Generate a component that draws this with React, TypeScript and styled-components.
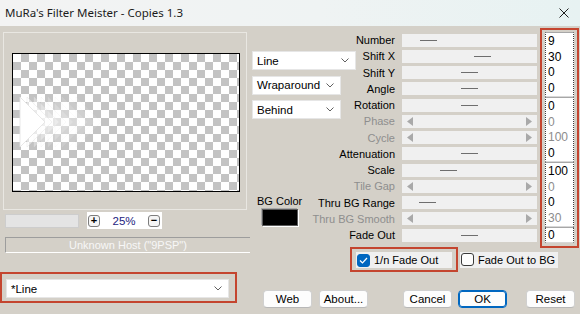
import styled, { createGlobalStyle } from 'styled-components'

const GlobalStyle = createGlobalStyle`
  html, body {
    margin: 0;
    padding: 0;
    background: #d4d0c8;
  }
  * { box-sizing: border-box; }
`

const RED = '#c4452f'
const ROW = 16.25

type Param = {
  label: string
  value: string
  thumb?: number
  disabled?: boolean
}

const params: Param[] = [
  { label: 'Number', value: '9', thumb: 18 },
  { label: 'Shift X', value: '30', thumb: 72 },
  { label: 'Shift Y', value: '0', thumb: 59 },
  { label: 'Angle', value: '0', thumb: 59 },
  { label: 'Rotation', value: '0', thumb: 59 },
  { label: 'Phase', value: '0', disabled: true },
  { label: 'Cycle', value: '100', disabled: true },
  { label: 'Attenuation', value: '0', thumb: 59 },
  { label: 'Scale', value: '100', thumb: 38 },
  { label: 'Tile Gap', value: '0', disabled: true },
  { label: 'Thru BG Range', value: '0', thumb: 17 },
  { label: 'Thru BG Smooth', value: '30', disabled: true },
  { label: 'Fade Out', value: '0', thumb: 59 },
]

// edit boxes come in blocks of four rows
const inputGroups = [params.slice(0, 4), params.slice(4, 8), params.slice(8, 12), params.slice(12)]

const Window = styled.div`
  width: 580px;
  height: 314px;
  background: #d4d0c8;
  display: flex;
  flex-direction: column;
  overflow: hidden;
  font-family: "Liberation Sans", Arial, sans-serif;
  font-size: 11px;
  color: #000;
`

const TitleBar = styled.div`
  height: 26px;
  flex-shrink: 0;
  display: flex;
  align-items: center;
  justify-content: space-between;
  padding: 0 11px 1px 5px;
  background: linear-gradient(90deg, #f3f3f3 0%, #eff3f3 55%, #e7f2f2 100%);
  font-family: "Noto Sans", "Open Sans", sans-serif;
  font-size: 11.5px;
  color: #1b1b1b;
`

const Body = styled.div`
  flex: 1;
  display: flex;
`

const LeftPane = styled.div`
  width: 250px;
  flex-shrink: 0;
  display: flex;
  flex-direction: column;
`

const GroupBox = styled.div`
  margin: 6px 0 0 3px;
  width: 244px;
  height: 178px;
  border: 1px solid #e9e7e2;
  padding: 20px 0 0 8px;
`

const Canvas = styled.div`
  width: 228px;
  height: 139px;
  border: 1px solid #000;
  background-color: #fff;
  background-image: conic-gradient(#c3c3c3 25%, #fff 0 50%, #c3c3c3 0 75%, #fff 0);
  background-size: 16px 16px;

  svg { display: block; }
`

const ZoomRow = styled.div`
  margin-top: 2px;
  height: 17px;
  display: flex;
  align-items: center;
`

const ZoomField = styled.div`
  margin-left: 5px;
  width: 74px;
  height: 14px;
  background: #e4e4e4;
  border: 1px solid #cdcdcd;
`

const ZoomBox = styled.div`
  margin-left: 8px;
  width: 75px;
  height: 17px;
  background: #fff;
  display: flex;
  align-items: center;
  padding: 0 2px 0 1px;
`

const TinyButton = styled.div`
  width: 12px;
  height: 12px;
  border: 1px solid #7d7d7d;
  border-radius: 3px;
  background: #f5f5f5;
  display: flex;
  align-items: center;
  justify-content: center;
  font-weight: bold;
  font-size: 11px;
  line-height: 1;
`

const ZoomValue = styled.span`
  flex: 1;
  text-align: center;
  color: #1d1d7e;
  font-size: 11.5px;
`

const HostBar = styled.div`
  margin: 8px 0 0 5px;
  height: 16px;
  border-top: 1px solid #9d9d9d;
  border-left: 1px solid #9d9d9d;
  border-bottom: 1px solid #fff;
  display: flex;
  align-items: center;
  justify-content: center;
  color: #f7f7f7;
`

const PresetFrame = styled.div`
  margin-top: 19px;
  width: 237px;
  height: 31px;
  border: 2px solid ${RED};
  padding: 5px 6px 3px 4px;
`

const Select = styled.div<{ $width?: number }>`
  width: ${(p) => (p.$width ? `${p.$width}px` : '100%')};
  height: 19px;
  background: #fff;
  border: 1px solid #e6e6e6;
  display: flex;
  align-items: center;
  justify-content: space-between;
  padding: 0 6px 0 4px;
  font-size: 11.5px;
`

const RightPane = styled.div`
  flex: 1;
  display: flex;
  flex-direction: column;
`

const TopArea = styled.div`
  display: flex;
  align-items: flex-start;
`

const ParamGrid = styled.div`
  margin-top: 6px;
  display: grid;
  grid-template-columns: 145px 135px;
  grid-template-rows: repeat(13, ${ROW}px);
  column-gap: 7px;
`

const ParamLabel = styled.div<{ $row: number; $disabled?: boolean }>`
  grid-column: 1;
  grid-row: ${(p) => p.$row};
  justify-self: end;
  line-height: ${ROW}px;
  white-space: nowrap;
  color: ${(p) => (p.$disabled ? '#8e8e8e' : '#000')};
`

const MidStack = styled.div`
  grid-column: 1;
  grid-row: 2 / span 5;
  justify-self: start;
  align-self: start;
  margin: 2.75px 0 0 2px;
  display: flex;
  flex-direction: column;
  gap: 5.5px;
`

const BgBlock = styled.div`
  grid-column: 1;
  grid-row: 11 / span 3;
  justify-self: start;
  align-self: start;
  margin: 0 0 0 7px;
  display: flex;
  flex-direction: column;
  align-items: center;
`

const BgLabel = styled.span`
  line-height: 13px;
`

const Swatch = styled.div`
  margin-top: 1.5px;
  width: 36px;
  height: 17px;
  background: #000;
  border: 1px solid #5a5a5a;
  box-shadow: 1px 1px 0 #fff, -1px -1px 0 #a8a8a8;
`

const Slider = styled.div<{ $row: number; $disabled?: boolean }>`
  grid-column: 2;
  grid-row: ${(p) => p.$row};
  align-self: center;
  height: 13px;
  background: #f0f0f0;
  display: flex;
  align-items: center;
  justify-content: ${(p) => (p.$disabled ? 'space-between' : 'flex-start')};
  padding: ${(p) => (p.$disabled ? '0 5px' : '0')};
`

const Thumb = styled.div`
  width: 17px;
  height: 1px;
  background: #6e6e6e;
`

const RedBox = styled.div`
  margin: 2px 0 0 3px;
  width: 39px;
  border: 2px solid ${RED};
  padding: 2px 3px 3px 3px;
`

const InputGroup = styled.div<{ $rows: number }>`
  height: ${(p) => p.$rows * ROW}px;
  background: #fff;
  border-top: 1px solid #a7a7a7;
  border-bottom: 1px solid #d8d8d8;
  border-left: 1px dotted #3c3c3c;
  border-right: 1px dotted #3c3c3c;
  display: flex;
  flex-direction: column;
`

const InputCell = styled.div<{ $disabled?: boolean }>`
  flex: 1;
  display: flex;
  align-items: center;
  padding-left: 2px;
  font-size: 12px;
  color: ${(p) => (p.$disabled ? '#8c8c8c' : '#000')};
`

const CheckRow = styled.div`
  margin: -1px 0 0 100px;
  display: flex;
  align-items: center;
`

const CheckFrame = styled.div`
  border: 2px solid ${RED};
  padding: 3px 4px 2px 4px;
`

const CheckItem = styled.div<{ $width: number }>`
  width: ${(p) => p.$width}px;
  height: 16px;
  background: #f0f0f0;
  display: flex;
  align-items: center;
  gap: 4px;
  padding-left: 1px;
`

const CheckBox = styled.div<{ $checked?: boolean }>`
  width: 13px;
  height: 13px;
  border-radius: 3px;
  background: ${(p) => (p.$checked ? '#0067c0' : '#fdfdfd')};
  border: 1px solid ${(p) => (p.$checked ? '#0067c0' : '#3a3a3a')};
  display: flex;
  align-items: center;
  justify-content: center;
`

const PlainCheck = styled.div`
  margin-left: 2px;
`

const ButtonRow = styled.div`
  margin-top: 18px;
  padding-left: 13px;
  display: flex;
`

const Button = styled.button<{ $gap?: number; $primary?: boolean }>`
  margin-left: ${(p) => p.$gap ?? 0}px;
  width: 49px;
  height: 18px;
  padding: 0;
  border-radius: 4px;
  background: #fdfdfd;
  border: 1px solid ${(p) => (p.$primary ? '#0067c0' : '#d0d0d0')};
  border-bottom-color: ${(p) => (p.$primary ? '#0067c0' : '#b8b8b8')};
  box-shadow: ${(p) => (p.$primary ? 'inset 0 0 0 1px #0067c0' : 'none')};
  font-family: "Liberation Sans", Arial, sans-serif;
  font-size: 11.5px;
  color: #000;
`

const Chevron = ({ color = '#606060' }: { color?: string }) => (
  <svg width="8" height="5" viewBox="0 0 8 5">
    <polyline points="0.5,0.5 4,4 7.5,0.5" fill="none" stroke={color} strokeWidth="1" />
  </svg>
)

const Arrow = ({ dir }: { dir: 'left' | 'right' }) => (
  <svg width="6" height="9" viewBox="0 0 6 9">
    <polygon points={dir === 'left' ? '6,0 0,4.5 6,9' : '0,0 6,4.5 0,9'} fill="#a9a9a9" />
  </svg>
)

const CloseIcon = () => (
  <svg width="10" height="10" viewBox="0 0 10 10">
    <path d="M0.5 0.5 L9.5 9.5 M9.5 0.5 L0.5 9.5" stroke="#1f1f1f" strokeWidth="1" />
  </svg>
)

const Tick = () => (
  <svg width="9" height="7" viewBox="0 0 9 7">
    <polyline points="1,3.5 3.5,6 8,1" fill="none" stroke="#fff" strokeWidth="1.2" />
  </svg>
)

// the fading copies of the line shape in the preview
const Preview = () => {
  const copies = Array.from({ length: 9 }, (_, i) => i).reverse()
  return (
    <svg width="226" height="137" viewBox="0 0 226 137">
      {copies.map((i) => (
        <polygon
          key={i}
          points={`${7 + i * 7},43 ${32 + i * 7},68 ${7 + i * 7},93`}
          fill="#fff"
          fillOpacity={1 / (i + 1)}
          stroke="#e2e2e2"
          strokeOpacity={1 / (i + 1)}
          strokeWidth="0.8"
        />
      ))}
    </svg>
  )
}

export default function App() {
  return (
    <>
      <GlobalStyle />
      <Window>
        <TitleBar>
          <span>MuRa's Filter Meister - Copies 1.3</span>
          <CloseIcon />
        </TitleBar>
        <Body>
          <LeftPane>
            <GroupBox>
              <Canvas>
                <Preview />
              </Canvas>
            </GroupBox>
            <ZoomRow>
              <ZoomField />
              <ZoomBox>
                <TinyButton>+</TinyButton>
                <ZoomValue>25%</ZoomValue>
                <TinyButton>−</TinyButton>
              </ZoomBox>
            </ZoomRow>
            <HostBar>Unknown Host ("9PSP")</HostBar>
            <PresetFrame>
              <Select>
                <span>*Line</span>
                <Chevron />
              </Select>
            </PresetFrame>
          </LeftPane>
          <RightPane>
            <TopArea>
              <ParamGrid>
                <MidStack>
                  <Select $width={104}>
                    <span>Line</span>
                    <Chevron />
                  </Select>
                  <Select $width={89}>
                    <span>Wraparound</span>
                    <Chevron />
                  </Select>
                  <Select $width={89}>
                    <span>Behind</span>
                    <Chevron />
                  </Select>
                </MidStack>
                <BgBlock>
                  <BgLabel>BG Color</BgLabel>
                  <Swatch />
                </BgBlock>
                {params.map((p, i) => (
                  <ParamLabel key={p.label} $row={i + 1} $disabled={p.disabled}>
                    {p.label}
                  </ParamLabel>
                ))}
                {params.map((p, i) => (
                  <Slider key={p.label + '-s'} $row={i + 1} $disabled={p.disabled}>
                    {p.disabled ? (
                      <>
                        <Arrow dir="left" />
                        <Arrow dir="right" />
                      </>
                    ) : (
                      <Thumb style={{ marginLeft: p.thumb }} />
                    )}
                  </Slider>
                ))}
              </ParamGrid>
              <RedBox>
                {inputGroups.map((group, gi) => (
                  <InputGroup key={gi} $rows={group.length}>
                    {group.map((p) => (
                      <InputCell key={p.label} $disabled={p.disabled}>
                        {p.value}
                      </InputCell>
                    ))}
                  </InputGroup>
                ))}
              </RedBox>
            </TopArea>
            <CheckRow>
              <CheckFrame>
                <CheckItem $width={96}>
                  <CheckBox $checked>
                    <Tick />
                  </CheckBox>
                  <span>1/n Fade Out</span>
                </CheckItem>
              </CheckFrame>
              <PlainCheck>
                <CheckItem $width={98}>
                  <CheckBox />
                  <span>Fade Out to BG</span>
                </CheckItem>
              </PlainCheck>
            </CheckRow>
            <ButtonRow>
              <Button>Web</Button>
              <Button $gap={7}>About...</Button>
              <Button $gap={35}>Cancel</Button>
              <Button $gap={6} $primary>
                OK
              </Button>
              <Button $gap={19}>Reset</Button>
            </ButtonRow>
          </RightPane>
        </Body>
      </Window>
    </>
  )
}
